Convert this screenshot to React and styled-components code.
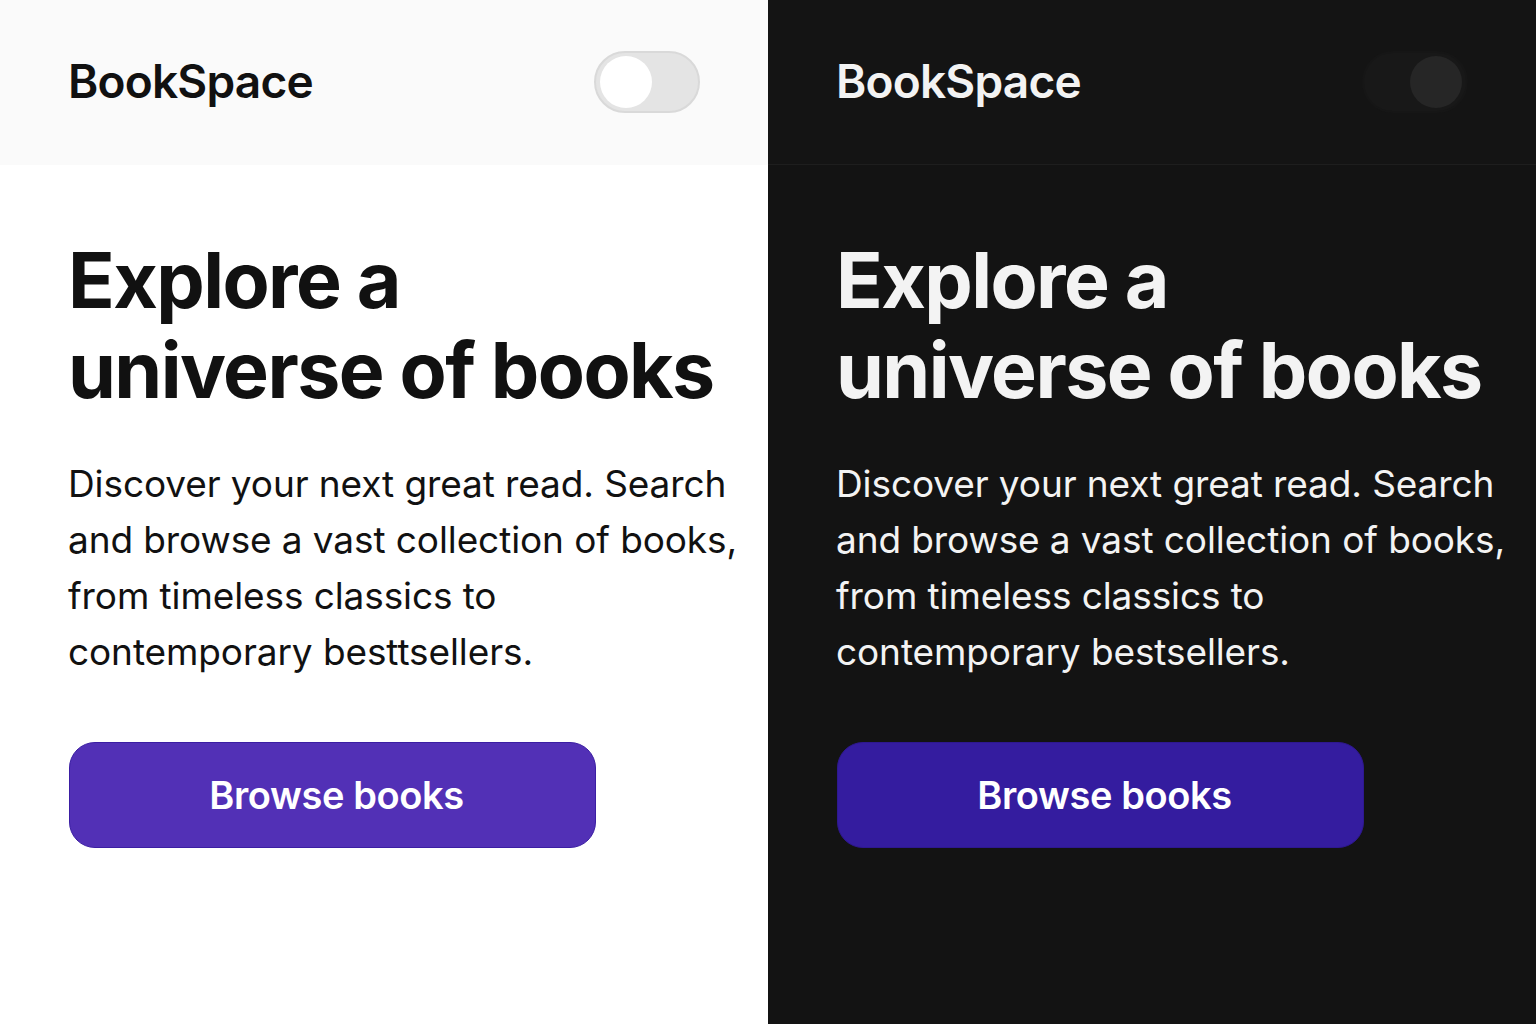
import React from "react";
import styled, { createGlobalStyle } from "styled-components";

const Global = createGlobalStyle`
  html, body {
    margin: 0;
    padding: 0;
    height: 100%;
  }
  body {
    font-family: "Inter", "Noto Sans", sans-serif;
    -webkit-font-smoothing: antialiased;
  }
  #root {
    height: 100%;
  }
`;

const themes = {
  light: {
    header: "#fafafa",
    body: "#ffffff",
    line: "#fafafa",
    text: "#111111",
    track: "#e4e4e4",
    trackBorder: "#d9d9d9",
    knob: "#ffffff",
    button: "#5230b6",
    buttonBorder: "#3b1ea3",
  },
  dark: {
    header: "#141414",
    body: "#131313",
    line: "#1e1e1e",
    text: "#f3f3f3",
    track: "#181818",
    trackBorder: "#161616",
    knob: "#262626",
    button: "#341c9f",
    buttonBorder: "#2e1890",
  },
};

const Split = styled.div`
  display: grid;
  grid-template-columns: 1fr 1fr;
  width: 1536px;
  height: 1024px;
  overflow: hidden;
`;

const Panel = styled.section`
  display: flex;
  flex-direction: column;
  min-width: 0;
  background: ${(p) => p.t.body};
  color: ${(p) => p.t.text};
`;

const Header = styled.header`
  height: 165px;
  box-sizing: border-box;
  padding: 0 68px;
  display: flex;
  align-items: center;
  justify-content: space-between;
  background: ${(p) => p.t.header};
  border-bottom: 1px solid ${(p) => p.t.line};
`;

const Logo = styled.div`
  font-size: 46px;
  font-weight: 600;
  letter-spacing: -0.8px;
  margin-top: -2px;
`;

const Toggle = styled.div`
  width: 106px;
  height: 62px;
  box-sizing: border-box;
  border-radius: 31px;
  background: ${(p) => p.t.track};
  border: 2px solid ${(p) => p.t.trackBorder};
  display: flex;
  align-items: center;
  justify-content: ${(p) => (p.on ? "flex-end" : "flex-start")};
  padding: 0 4px;
`;

const Knob = styled.span`
  width: 52px;
  height: 52px;
  border-radius: 50%;
  background: ${(p) => p.t.knob};
`;

const Content = styled.main`
  padding: 70px 68px 0;
  display: flex;
  flex-direction: column;
  align-items: flex-start;
  white-space: nowrap;
`;

const Title = styled.h1`
  margin: 0;
  font-size: 77px;
  line-height: 90px;
  font-weight: 700;
  letter-spacing: -1.6px;
`;

const Lead = styled.p`
  margin: 41px 0 0;
  font-size: 37px;
  line-height: 56px;
  font-weight: 400;
  letter-spacing: -0.1px;
`;

const Button = styled.button`
  margin-top: 62px;
  margin-left: 1px;
  width: 527px;
  height: 106px;
  border-radius: 26px;
  background: ${(p) => p.t.button};
  border: 1.5px solid ${(p) => p.t.buttonBorder};
  color: #ffffff;
  font-family: "Inter", "Noto Sans", sans-serif;
  font-size: 38px;
  font-weight: 600;
  letter-spacing: -0.4px;
  padding: 0 0 0 8px;
  cursor: pointer;
`;

const Side = ({ mode, last }) => {
  const t = themes[mode];
  return (
    <Panel t={t}>
      <Header t={t}>
        <Logo>BookSpace</Logo>
        <Toggle t={t} on={mode === "dark"}>
          <Knob t={t} />
        </Toggle>
      </Header>
      <Content>
        <Title>
          Explore a
          <br />
          universe of books
        </Title>
        <Lead>
          Discover your next great read. Search
          <br />
          and browse a vast collection of books,
          <br />
          from timeless classics to
          <br />
          contemporary {last}.
        </Lead>
        <Button t={t}>Browse books</Button>
      </Content>
    </Panel>
  );
};

export default function App() {
  return (
    <>
      <Global />
      <Split>
        <Side mode="light" last="besttsellers" />
        <Side mode="dark" last="bestsellers" />
      </Split>
    </>
  );
}
